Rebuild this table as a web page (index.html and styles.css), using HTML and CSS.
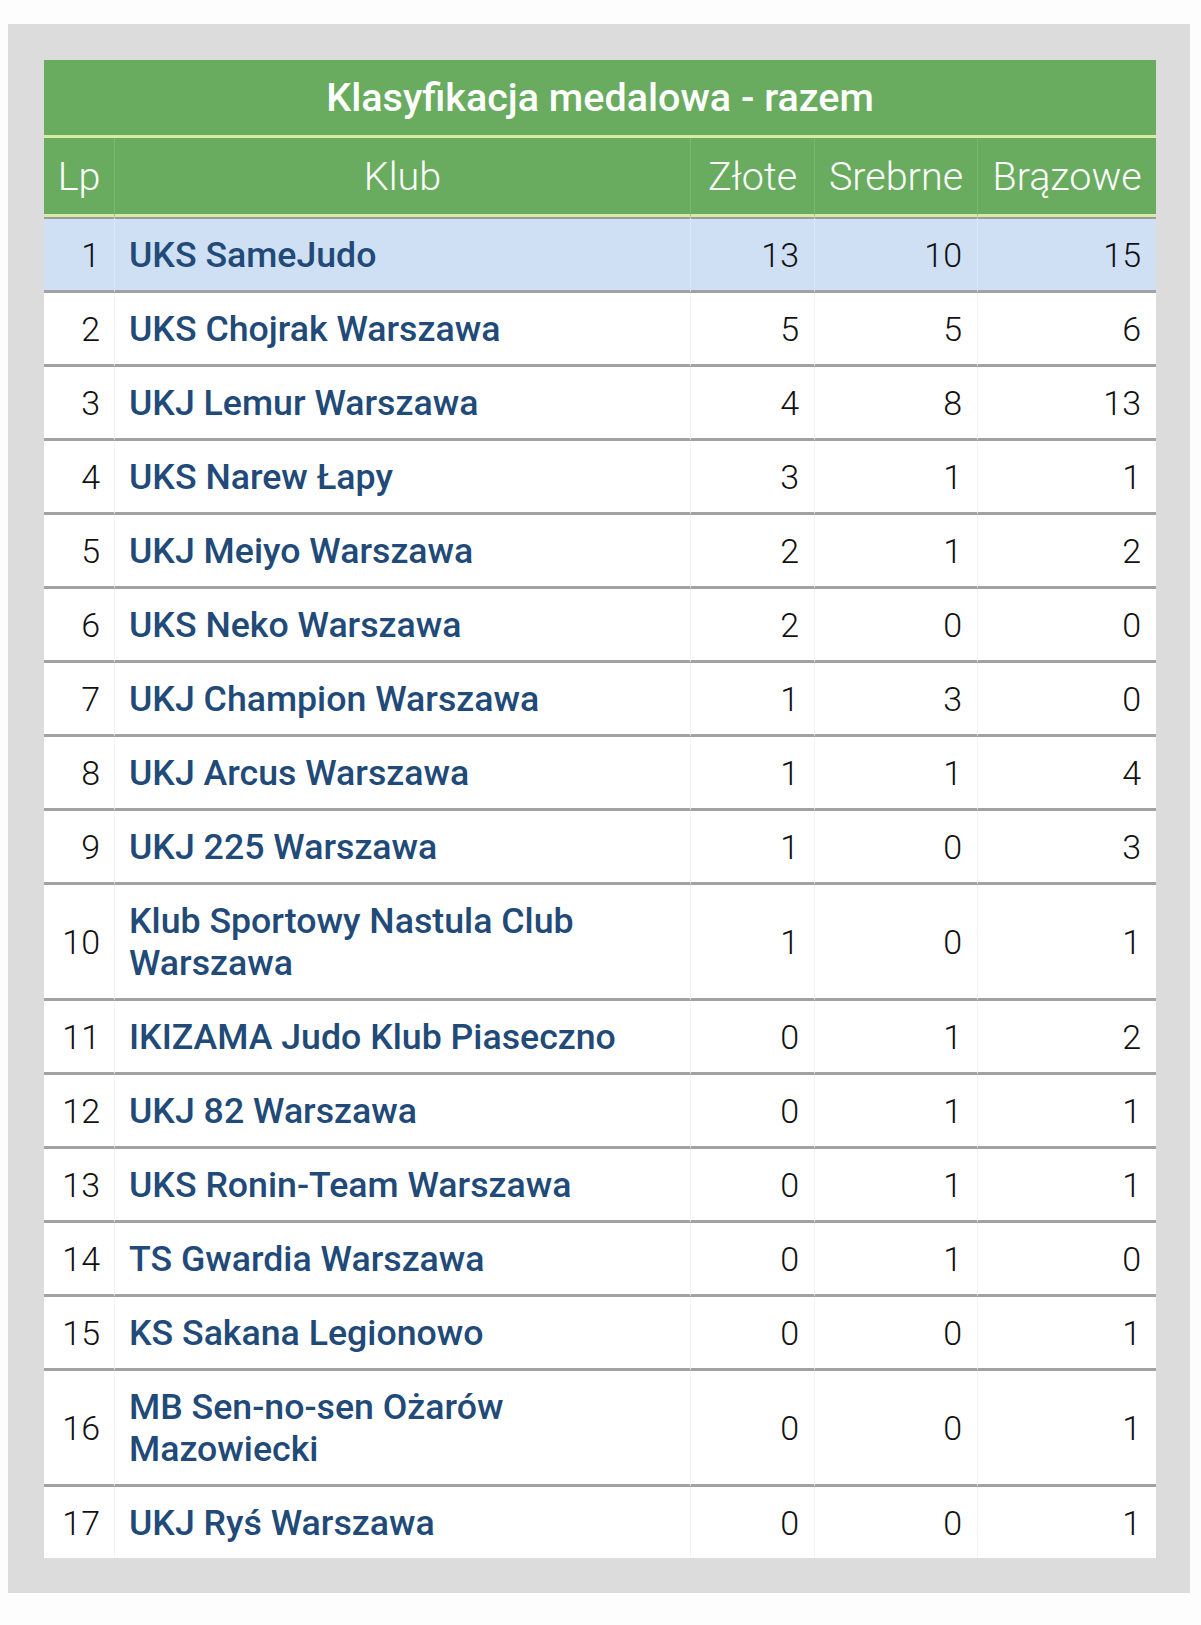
FILE: index.html
```html
<!DOCTYPE html>
<html lang="pl">
<head>
<meta charset="utf-8">
<title>Klasyfikacja medalowa - razem</title>
<link rel="stylesheet" href="styles.css">
</head>
<body>
<div class="panel">
<table class="medals">
<colgroup>
<col class="c-lp"><col class="c-club"><col class="c-g"><col class="c-s"><col class="c-b">
</colgroup>
<thead>
<tr><th colspan="5" class="title">Klasyfikacja medalowa - razem</th></tr>
<tr class="cols"><th>Lp</th><th>Klub</th><th>Złote</th><th>Srebrne</th><th>Brązowe</th></tr>
</thead>
<tbody>
<tr class="hl"><td class="lp">1</td><td class="club">UKS SameJudo</td><td class="n">13</td><td class="n">10</td><td class="n">15</td></tr>
<tr><td class="lp">2</td><td class="club">UKS Chojrak Warszawa</td><td class="n">5</td><td class="n">5</td><td class="n">6</td></tr>
<tr><td class="lp">3</td><td class="club">UKJ Lemur Warszawa</td><td class="n">4</td><td class="n">8</td><td class="n">13</td></tr>
<tr><td class="lp">4</td><td class="club">UKS Narew Łapy</td><td class="n">3</td><td class="n">1</td><td class="n">1</td></tr>
<tr><td class="lp">5</td><td class="club">UKJ Meiyo Warszawa</td><td class="n">2</td><td class="n">1</td><td class="n">2</td></tr>
<tr><td class="lp">6</td><td class="club">UKS Neko Warszawa</td><td class="n">2</td><td class="n">0</td><td class="n">0</td></tr>
<tr><td class="lp">7</td><td class="club">UKJ Champion Warszawa</td><td class="n">1</td><td class="n">3</td><td class="n">0</td></tr>
<tr><td class="lp">8</td><td class="club">UKJ Arcus Warszawa</td><td class="n">1</td><td class="n">1</td><td class="n">4</td></tr>
<tr><td class="lp">9</td><td class="club">UKJ 225 Warszawa</td><td class="n">1</td><td class="n">0</td><td class="n">3</td></tr>
<tr><td class="lp">10</td><td class="club">Klub Sportowy Nastula Club Warszawa</td><td class="n">1</td><td class="n">0</td><td class="n">1</td></tr>
<tr><td class="lp">11</td><td class="club">IKIZAMA Judo Klub Piaseczno</td><td class="n">0</td><td class="n">1</td><td class="n">2</td></tr>
<tr><td class="lp">12</td><td class="club">UKJ 82 Warszawa</td><td class="n">0</td><td class="n">1</td><td class="n">1</td></tr>
<tr><td class="lp">13</td><td class="club">UKS Ronin-Team Warszawa</td><td class="n">0</td><td class="n">1</td><td class="n">1</td></tr>
<tr><td class="lp">14</td><td class="club">TS Gwardia Warszawa</td><td class="n">0</td><td class="n">1</td><td class="n">0</td></tr>
<tr><td class="lp">15</td><td class="club">KS Sakana Legionowo</td><td class="n">0</td><td class="n">0</td><td class="n">1</td></tr>
<tr><td class="lp">16</td><td class="club">MB Sen-no-sen Ożarów Mazowiecki</td><td class="n">0</td><td class="n">0</td><td class="n">1</td></tr>
<tr><td class="lp">17</td><td class="club">UKJ Ryś Warszawa</td><td class="n">0</td><td class="n">0</td><td class="n">1</td></tr>
</tbody>
</table>
</div>
</body>
</html>
```

FILE: styles.css
```css
html, body {
  background: #fdfdfd;
}
body {
  margin: 24px 0 0 8px;
  font-family: Roboto, "Noto Sans", sans-serif;
}
.panel {
  width: 1182px;
  box-sizing: border-box;
  background: #dcdcdc;
  padding: 36px 34px 35px 36px;
}
.medals {
  width: 1112px;
  table-layout: fixed;
  border-collapse: separate;
  border-spacing: 0;
  background: #ffffff;
}
.c-lp { width: 70px; }
.c-club { width: 576px; }
.c-g { width: 124px; }
.c-s { width: 163px; }
.c-b { width: 179px; }

.medals th {
  background: #69ac5f;
  color: #ffffff;
  font-weight: 300;
  font-size: 39.5px;
  height: 76px;
  padding: 0;
  text-align: center;
  border-bottom: 3px solid #d7eaa6;
  border-left: 1px solid #7cb772;
}
.medals th:first-child {
  border-left: none;
}
.medals th.title {
  font-weight: 500;
  font-size: 39.5px;
  height: 75px;
  border-left: none;
}
.medals td {
  padding: 15px 15px 14px;
  line-height: 42px;
  border-bottom: 3px solid #a2a2a2;
  border-left: 1px solid #f3f3f3;
  vertical-align: middle;
  white-space: normal;
}
.medals td:first-child {
  border-left: none;
}
.medals tbody tr:first-child td {
  border-top: 2px solid #9c9c9c;
}
.medals tbody tr:last-child td {
  border-bottom: none;
}
.medals tr.hl td {
  background: #cfe0f5;
  border-left-color: #dbe7f6;
}
.medals tr.hl td:first-child {
  border-left: none;
}
.lp {
  text-align: right;
  font-weight: 300;
  font-size: 34px;
  color: #111111;
  padding-left: 0 !important;
  padding-right: 14px !important;
}
.club {
  font-weight: 500;
  font-size: 35.7px;
  color: #214a78;
  padding-left: 14px !important;
}
.n {
  text-align: right;
  font-weight: 300;
  font-size: 34px;
  color: #111111;
}
```
